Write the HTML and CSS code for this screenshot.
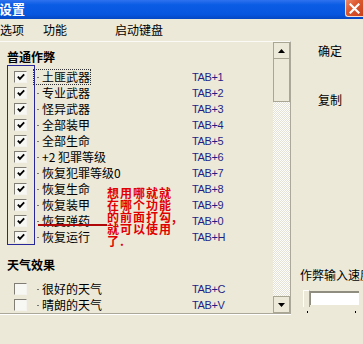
FILE: index.html
```html
<!DOCTYPE html>
<html lang="zh">
<head>
<meta charset="utf-8">
<title>设置</title>
<link rel="stylesheet" href="styles.css">
</head>
<body>
<div class="window">
  <div class="titlebar">
    <span class="title">设置</span>
    <span class="close"><svg width="11" height="11" viewBox="0 0 11 11"><path d="M1.5 1.5 L9.5 9.5 M9.5 1.5 L1.5 9.5" stroke="#fff" stroke-width="2.2" stroke-linecap="square"/></svg></span>
  </div>
  <div class="menubar">
    <span class="menu m1">选项</span>
    <span class="menu m2">功能</span>
    <span class="menu">启动键盘</span>
  </div>
  <div class="main">
    <div class="panel">
      <div class="list">
        <div class="heading">普通作弊</div>
        <div class="rows">
          <div class="row"><span class="cb on"><svg viewBox="0 0 11 11"><path d="M2 5 L4.3 7.5 L9 2.5" fill="none" stroke="#000" stroke-width="2"/></svg></span><span class="cell"><span class="item focus"><span class="dash"></span>土匪武器</span></span><span class="key">TAB+1</span></div>
          <div class="row"><span class="cb on"><svg viewBox="0 0 11 11"><path d="M2 5 L4.3 7.5 L9 2.5" fill="none" stroke="#000" stroke-width="2"/></svg></span><span class="cell"><span class="item"><span class="dash"></span>专业武器</span></span><span class="key">TAB+2</span></div>
          <div class="row"><span class="cb on"><svg viewBox="0 0 11 11"><path d="M2 5 L4.3 7.5 L9 2.5" fill="none" stroke="#000" stroke-width="2"/></svg></span><span class="cell"><span class="item"><span class="dash"></span>怪异武器</span></span><span class="key">TAB+3</span></div>
          <div class="row"><span class="cb on"><svg viewBox="0 0 11 11"><path d="M2 5 L4.3 7.5 L9 2.5" fill="none" stroke="#000" stroke-width="2"/></svg></span><span class="cell"><span class="item"><span class="dash"></span>全部装甲</span></span><span class="key">TAB+4</span></div>
          <div class="row"><span class="cb on"><svg viewBox="0 0 11 11"><path d="M2 5 L4.3 7.5 L9 2.5" fill="none" stroke="#000" stroke-width="2"/></svg></span><span class="cell"><span class="item"><span class="dash"></span>全部生命</span></span><span class="key">TAB+5</span></div>
          <div class="row"><span class="cb on"><svg viewBox="0 0 11 11"><path d="M2 5 L4.3 7.5 L9 2.5" fill="none" stroke="#000" stroke-width="2"/></svg></span><span class="cell"><span class="item"><span class="dash"></span>+2 犯罪等级</span></span><span class="key">TAB+6</span></div>
          <div class="row"><span class="cb on"><svg viewBox="0 0 11 11"><path d="M2 5 L4.3 7.5 L9 2.5" fill="none" stroke="#000" stroke-width="2"/></svg></span><span class="cell"><span class="item"><span class="dash"></span>恢复犯罪等级0</span></span><span class="key">TAB+7</span></div>
          <div class="row"><span class="cb on"><svg viewBox="0 0 11 11"><path d="M2 5 L4.3 7.5 L9 2.5" fill="none" stroke="#000" stroke-width="2"/></svg></span><span class="cell"><span class="item"><span class="dash"></span>恢复生命</span></span><span class="key">TAB+8</span></div>
          <div class="row"><span class="cb on"><svg viewBox="0 0 11 11"><path d="M2 5 L4.3 7.5 L9 2.5" fill="none" stroke="#000" stroke-width="2"/></svg></span><span class="cell"><span class="item"><span class="dash"></span>恢复装甲</span></span><span class="key">TAB+9</span></div>
          <div class="row"><span class="cb on"><svg viewBox="0 0 11 11"><path d="M2 5 L4.3 7.5 L9 2.5" fill="none" stroke="#000" stroke-width="2"/></svg></span><span class="cell"><span class="item"><span class="dash"></span>恢复弹药</span></span><span class="key">TAB+0</span></div>
          <div class="row"><span class="cb on"><svg viewBox="0 0 11 11"><path d="M2 5 L4.3 7.5 L9 2.5" fill="none" stroke="#000" stroke-width="2"/></svg></span><span class="cell"><span class="item"><span class="dash"></span>恢复运行</span></span><span class="key">TAB+H</span></div>
        </div>
        <div class="heading h2">天气效果</div>
        <div class="rows2">
          <div class="row"><span class="cb"></span><span class="cell"><span class="item"><span class="dash"></span>很好的天气</span></span><span class="key">TAB+C</span></div>
          <div class="row"><span class="cb"></span><span class="cell"><span class="item"><span class="dash"></span>晴朗的天气</span></span><span class="key">TAB+V</span></div>
        </div>
        <div class="bluebox"></div>
        <div class="redline"></div>
        <div class="note">想用哪就就<br>在哪个功能<br>的前面打勾,<br>就可以使用<br>了.</div>
      </div>
      <div class="scroll">
        <div class="sbtn"><svg width="7" height="4" viewBox="0 0 7 4"><path d="M0 4 L3.5 0 L7 4Z" fill="#000"/></svg></div>
        <div class="thumb"></div>
        <div class="track"></div>
        <div class="sbtn"><svg width="7" height="4" viewBox="0 0 7 4"><path d="M0 0 L3.5 4 L7 0Z" fill="#000"/></svg></div>
      </div>
    </div>
    <div class="side">
      <div class="btn b1">确定</div>
      <div class="btn b2">复制</div>
      <div class="speed">作弊输入速度</div>
      <div class="trackbar">
        <span class="tthumb"></span>
        <span class="tbox"></span>
      </div>
      <div class="ticks"><span class="tick"></span><span class="tick"></span></div>
    </div>
  </div>
</div>
</body>
</html>
```

FILE: styles.css
```css
html, body {
  margin: 0;
  padding: 0;
}
body {
  width: 363px;
  height: 344px;
  overflow: hidden;
  background: #ece9d8;
  font-family: "Noto Sans CJK SC", "Liberation Sans", sans-serif;
  font-size: 12px;
  color: #000;
}
.window {
  width: 363px;
  height: 344px;
  overflow: hidden;
}
.titlebar {
  height: 19px;
  display: flex;
  justify-content: space-between;
  align-items: flex-start;
  background: linear-gradient(#2e72ee 0%, #0b5ce4 25%, #0756e0 75%, #0447c2 100%);
}
.title {
  color: #fff;
  font-weight: bold;
  font-size: 13px;
  line-height: 18px;
  margin-left: -1px;
}
.close {
  width: 18px;
  height: 17px;
  box-sizing: border-box;
  background: linear-gradient(135deg, #ef8a6a, #dd5a30 40%, #c8401c);
  border: 1px solid #f3ddd2;
  border-right: none;
  border-top: none;
  border-radius: 0 0 0 3px;
  display: flex;
  align-items: center;
  justify-content: center;
}
.menubar {
  height: 22px;
  display: flex;
  align-items: center;
  line-height: 22px;
}
.menu {
  font-size: 12px;
}
.m1 { width: 43px; }
.m2 { width: 72px; }
.main {
  display: flex;
  height: 303px;
}
.panel {
  width: 291px;
  height: 273px;
  box-sizing: border-box;
  display: flex;
  border-top: 1px solid #fbfaf6;
  border-bottom: 1px solid #aca899;
  border-right: 1px solid #aca899;
  box-shadow: 0 1px 0 #fff;
}
.list {
  position: relative;
  width: 273px;
  padding-top: 7px;
  box-sizing: border-box;
  overflow: hidden;
}
.heading {
  font-weight: bold;
  height: 16px;
  line-height: 16px;
  padding-left: 7px;
}
.h2 {
  margin-top: 12px;
}
.rows {
  padding-top: 4px;
}
.rows2 {
  padding-top: 8px;
}
.row {
  display: grid;
  grid-template-columns: 13px 165px auto;
  align-items: center;
  height: 16px;
  padding-left: 14px;
}
.cb {
  width: 13px;
  height: 12px;
  box-sizing: border-box;
  border: 1px solid;
  border-color: #7f7d74 #f4f3ee #f4f3ee #7f7d74;
  background: #f7f7f4;
  display: flex;
  align-items: center;
  justify-content: center;
}
.cb svg {
  width: 10px;
  height: 10px;
}
.cell {
  display: flex;
}
.item {
  display: inline-flex;
  align-items: center;
  height: 16px;
  line-height: 16px;
  margin-left: 6px;
  padding: 0 1px 0 4px;
  white-space: nowrap;
}
.focus {
  outline: 1px dotted #333;
  outline-offset: -1px;
}
.dash {
  width: 2px;
  height: 1px;
  background: #777;
  margin-right: 3px;
}
.key {
  font-family: "Liberation Sans", sans-serif;
  font-size: 11px;
  letter-spacing: -0.4px;
  color: #1f1f86;
  line-height: 16px;
}
.bluebox {
  position: absolute;
  left: 7px;
  top: 23px;
  width: 28px;
  height: 180px;
  box-sizing: border-box;
  border: 1px solid #27279a;
}
.redline {
  position: absolute;
  left: 38px;
  top: 182px;
  width: 69px;
  height: 2px;
  background: #b00808;
}
.note {
  position: absolute;
  left: 107px;
  top: 145px;
  color: #e10000;
  font-weight: bold;
  font-size: 12px;
  letter-spacing: 1px;
  line-height: 12px;
  white-space: nowrap;
}
.scroll {
  width: 17px;
  display: flex;
  flex-direction: column;
}
.sbtn {
  height: 17px;
  box-sizing: border-box;
  border: 1px solid #a9a694;
  background: #ece9d8;
  display: flex;
  align-items: center;
  justify-content: center;
}
.thumb {
  height: 43px;
  box-sizing: border-box;
  border: 1px solid #a9a694;
  border-top: none;
  background: #ece9d8;
}
.track {
  flex: 1;
  background-color: #f6f5f0;
  background-image: repeating-conic-gradient(#fdfdfb 0 25%, #e4e2d6 0 50%);
  background-size: 2px 2px;
}
.side {
  width: 72px;
  display: flex;
  flex-direction: column;
  white-space: nowrap;
}
.btn {
  height: 16px;
  line-height: 16px;
  padding-left: 27px;
}
.b1 { margin-top: 2px; }
.b2 { margin-top: 33px; }
.speed {
  margin-top: 159px;
  height: 16px;
  line-height: 16px;
  padding-left: 9px;
}
.trackbar {
  margin-top: 7px;
  display: flex;
  align-items: flex-start;
  padding-left: 12px;
  height: 17px;
}
.tthumb {
  width: 7px;
  height: 17px;
  box-sizing: border-box;
  border-left: 1px solid #fff;
  border-top: 1px solid #fff;
  border-right: 1px solid #9c9a8c;
  background: #ece9d8;
}
.tbox {
  width: 49px;
  height: 14px;
  margin-top: 1px;
  box-sizing: border-box;
  border-top: 2px solid #8f8d80;
  border-left: 1px solid #8f8d80;
  background: #fff;
}
.ticks {
  display: flex;
  justify-content: space-between;
  width: 49px;
  padding-left: 16px;
  margin-top: 4px;
}
.tick {
  width: 1px;
  height: 2px;
  background: #000;
}
```
